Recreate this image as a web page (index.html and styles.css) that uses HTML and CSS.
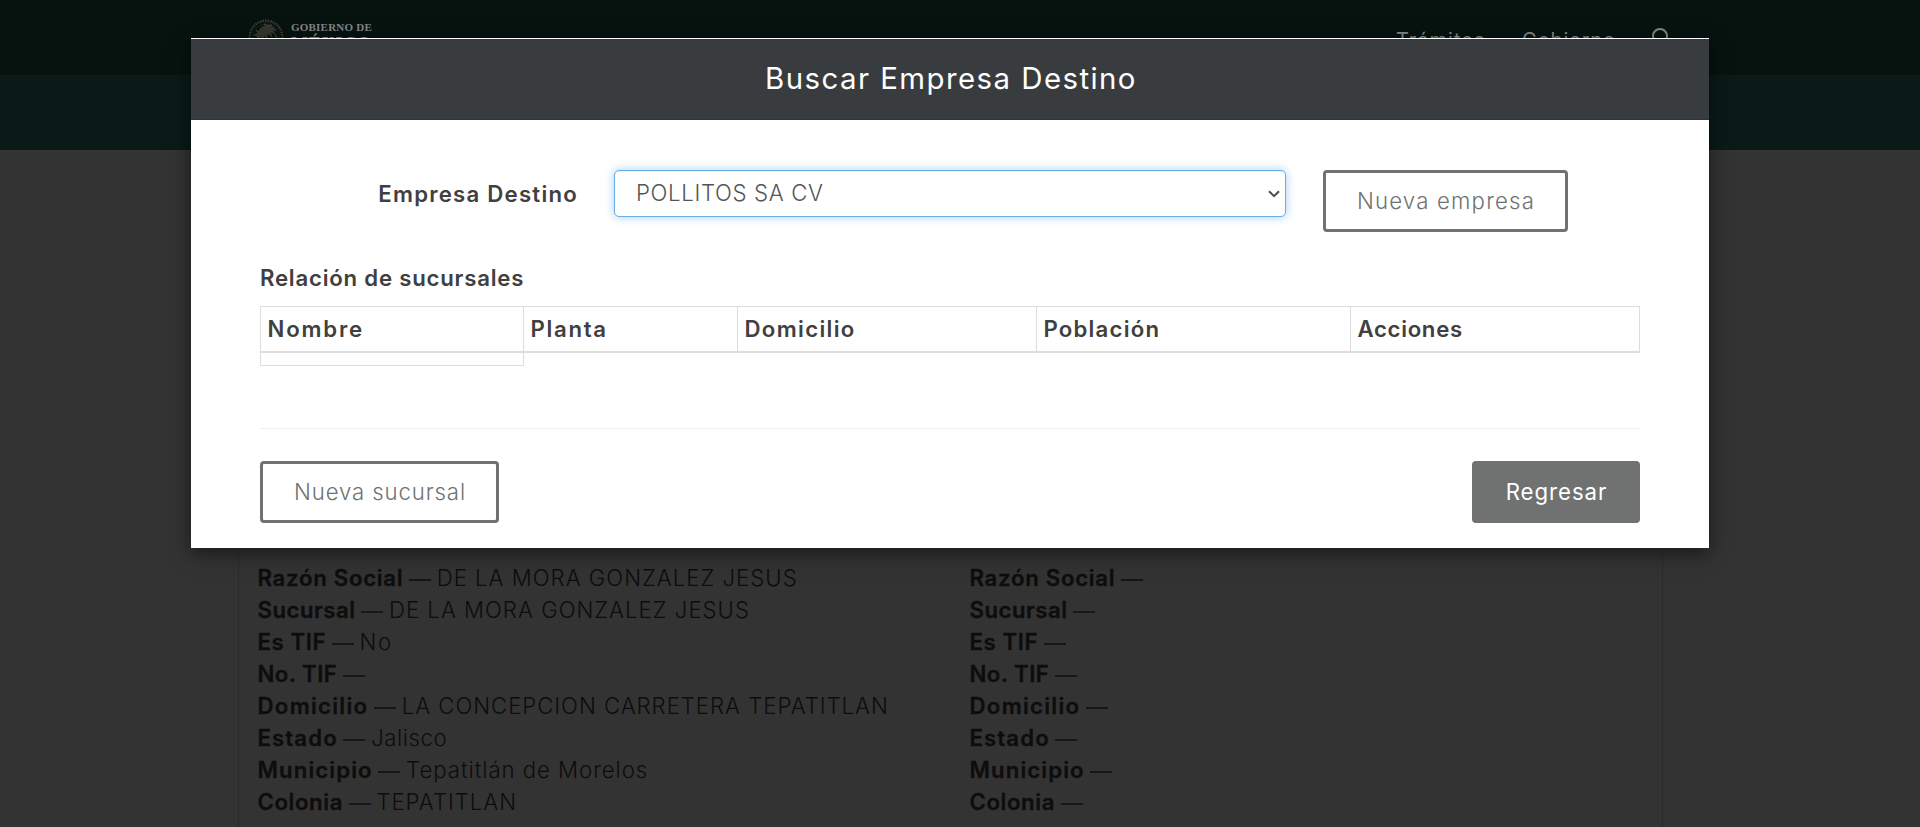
FILE: index.html
```html
<!DOCTYPE html>
<html lang="es">
<head>
<meta charset="utf-8">
<title>Buscar Empresa Destino</title>
<link rel="stylesheet" href="styles.css">
</head>
<body>
<header class="topbar">
  <div class="brand">
    <svg class="seal" viewBox="0 0 36 36" width="36" height="36" fill="none" stroke="#3c3d32">
      <circle cx="18" cy="18" r="16.3" stroke-width="2.4" stroke-dasharray="1.6 1"/>
      <circle cx="18" cy="18" r="13.2" stroke-width=".7" opacity=".5"/>
      <path d="M11 19c-2-6 1-11 6-12 5-1 9 1 11 5l-4-2 3 5-5-3 2 6-5-4v6l-3-4-2 6-1-5z" fill="#34352b" stroke-width=".8"/>
      <path d="M8 11l3 3-4 2 4 2-3 3M16 5l4 2 4-1M27 15l2 4-3 1M9 23c5 5 13 5 18 0" stroke-width="1.4"/>
    </svg>
    <div class="wordmark"><span class="gov">GOBIERNO DE</span><span class="mex">MÉXICO</span></div>
  </div>
  <nav class="nav">
    <a class="nav-tram">Trámites</a>
    <a class="nav-gob">Gobierno</a>
    <svg width="19" height="20" viewBox="0 0 19 20" fill="none" stroke="#848685" stroke-width="2"><circle cx="8" cy="8" r="7"/><path d="M12.5 13.5l5 5"/></svg>
  </nav>
</header>
<div class="subbar"></div>
<main class="card">
  <div class="info">
    <p><b class="s10">Razón Social</b><i></i><span class="v14">DE LA MORA GONZALEZ JESUS</span></p>
    <p><b class="s07">Sucursal</b><i></i><span class="v14">DE LA MORA GONZALEZ JESUS</span></p>
    <p><b class="s09">Es TIF</b><i></i><span class="v20">No</span></p>
    <p><b class="s07">No. TIF</b><i></i></p>
    <p><b class="s15">Domicilio</b><i></i><span class="v13">LA CONCEPCION CARRETERA TEPATITLAN</span></p>
    <p><b class="s14">Estado</b><i></i><span class="v08">Jalisco</span></p>
    <p><b class="s12">Municipio</b><i></i><span class="v13">Tepatitlán de Morelos</span></p>
    <p><b class="s09">Colonia</b><i></i><span class="v13">TEPATITLAN</span></p>
  </div>
  <div class="info">
    <p><b class="s10">Razón Social</b><i></i></p>
    <p><b class="s07">Sucursal</b><i></i></p>
    <p><b class="s09">Es TIF</b><i></i></p>
    <p><b class="s07">No. TIF</b><i></i></p>
    <p><b class="s15">Domicilio</b><i></i></p>
    <p><b class="s14">Estado</b><i></i></p>
    <p><b class="s12">Municipio</b><i></i></p>
    <p><b class="s09">Colonia</b><i></i></p>
  </div>
</main>

<section class="modal" role="dialog">
  <h4 class="modal-title">Buscar Empresa Destino</h4>
  <div class="modal-body">
    <div class="form-row">
      <label class="field-label" for="empresa">Empresa Destino</label>
      <div class="select-wrap">
        <select id="empresa" class="select"><option>POLLITOS SA CV</option></select>
        <svg class="chevron" width="12" height="8" viewBox="0 0 12 8" fill="none" stroke="#4a4a4a" stroke-width="2"><path d="M1 1.2l5 5 5-5"/></svg>
      </div>
      <button class="btn btn-empresa">Nueva empresa</button>
    </div>
    <h5 class="list-title">Relación de sucursales</h5>
    <div class="table-head">
      <div class="th-nombre">Nombre</div>
      <div class="th-planta">Planta</div>
      <div class="th-domicilio">Domicilio</div>
      <div class="th-poblacion">Población</div>
      <div class="th-acciones">Acciones</div>
    </div>
    <div class="table-row"></div>
    <hr class="rule">
    <div class="actions">
      <button class="btn btn-sucursal">Nueva sucursal</button>
      <button class="btn btn-solid">Regresar</button>
    </div>
  </div>
</section>
</body>
</html>
```
FILE: styles.css
```css
* { box-sizing: border-box; }
body {
  margin: 0;
  height: 827px;
  overflow: hidden;
  display: flex;
  flex-direction: column;
  background: #333;
  color: #404041;
  font: 300 22.2px/32px Inter, "Liberation Sans", sans-serif;
}

.topbar {
  height: 75px;
  flex: none;
  display: flex;
  justify-content: space-between;
  align-items: flex-start;
  padding: 19px 249px 0 248px;
  background: #06130f;
}
.brand { display: flex; gap: 7px; }
.wordmark {
  display: flex;
  flex-direction: column;
  gap: 1px;
  padding-top: 3px;
  color: #848685;
  font-family: "Liberation Serif", serif;
  font-weight: 700;
}
.gov { font-size: 11px; line-height: 11px; letter-spacing: .22px; }
.mex { font-size: 18px; line-height: 20px; letter-spacing: .8px; }
.nav {
  display: flex;
  padding-top: 8px;
  color: #848685;
  font-size: 20px;
  line-height: 26px;
  font-weight: 400;
}
.nav svg { margin-top: 1px; }
.nav-tram { width: 126px; letter-spacing: 1px; }
.nav-gob { width: 130px; letter-spacing: .8px; }
.subbar { height: 75px; flex: none; background: #0a1a16; }

.card {
  width: 1425px;
  flex: 1;
  margin-left: 238px;
  padding: 412px 0 0 18.5px;
  display: grid;
  grid-template-columns: 712px 1fr;
  border: 1px solid #2b2b2b;
  border-width: 0 1px;
  color: #0d0d0d;
}
.info p { margin: 0; height: 32px; display: flex; gap: 5.7px; white-space: nowrap; }
.info b { font-weight: 600; -webkit-text-stroke: .3px #0d0d0d; }
.info i { width: 22px; height: 1.5px; margin-top: 17px; background: #171717; }
.s07 { letter-spacing: .5px; }
.s09 { letter-spacing: .6px; }
.s10 { letter-spacing: .72px; }
.s12 { letter-spacing: 1.1px; }
.s14 { letter-spacing: 1.1px; }
.s15 { letter-spacing: 1.3px; }
.v08 { letter-spacing: .55px; }
.v13 { letter-spacing: .96px; }
.v14 { letter-spacing: 1px; }
.v20 { letter-spacing: 1.5px; }

.modal {
  position: absolute;
  top: 38px;
  left: 191px;
  width: 1518px;
  height: 510px;
  padding-top: 1px;
  background: #fff;
  box-shadow: 0 6px 19px rgba(0, 0, 0, .5);
}
.modal-title {
  margin: 0;
  height: 81px;
  padding-left: 2px;
  border-bottom: 1px solid #333435;
  background: #393c3e;
  color: #fff;
  font-size: 29.4px;
  font-weight: 400;
  line-height: 79px;
  letter-spacing: 1.45px;
  text-align: center;
}
.modal-body { padding: 50px 69px 0; }
.form-row {
  display: grid;
  grid-template-columns: 354px 709px auto;
  justify-content: start;
  align-items: start;
}
.field-label {
  padding: 8px 36px 0 0;
  font-weight: 600;
  letter-spacing: 1.23px;
  text-align: right;
}
.select-wrap { position: relative; width: 672px; height: 47px; }
.select {
  appearance: none;
  display: block;
  width: 100%;
  height: 47px;
  padding: 0 21px 1px;
  border: 1px solid #66afe9;
  border-radius: 5px;
  outline: 0;
  background: #fff;
  box-shadow: inset 0 1px 1px rgba(0, 0, 0, .075), 0 0 10px rgba(102, 175, 233, .6);
  color: #555;
  font: inherit;
  letter-spacing: .65px;
}
.chevron { position: absolute; right: 6px; top: 20px; }
.btn {
  height: 62px;
  padding: 0 0 0 1px;
  border: 3px solid #6f7271;
  border-radius: 4px;
  background: #fff;
  color: #6f7271;
  font: inherit;
}
.btn-empresa { width: 245px; letter-spacing: 1.2px; }
.btn-sucursal { width: 239px; letter-spacing: .88px; }
.btn-solid { width: 168px; background: #6f7271; color: #fff; font-weight: 400; letter-spacing: .96px; }

.list-title { margin: 30px 0 12px; font-size: inherit; font-weight: 600; letter-spacing: .78px; }
.table-head {
  display: grid;
  grid-template-columns: 263px 214px 299px 314px 290px;
  height: 47px;
  border: solid #ddd;
  border-width: 1px 1px 2px 0;
  font-weight: 600;
}
.table-head div { border-left: 1px solid #ddd; padding: 6px 6.5px; }
.th-nombre { letter-spacing: 1.8px; }
.th-planta { letter-spacing: 1.7px; }
.th-domicilio { letter-spacing: 1.33px; }
.th-poblacion { letter-spacing: 1.2px; }
.th-acciones { letter-spacing: .68px; }
.table-row { width: 264px; height: 13px; border: 1px solid #ddd; border-top: 0; }
.rule { margin: 62px 0 32px; border: 0; height: 1px; background: #eee; }
.actions { display: flex; justify-content: space-between; }
```
